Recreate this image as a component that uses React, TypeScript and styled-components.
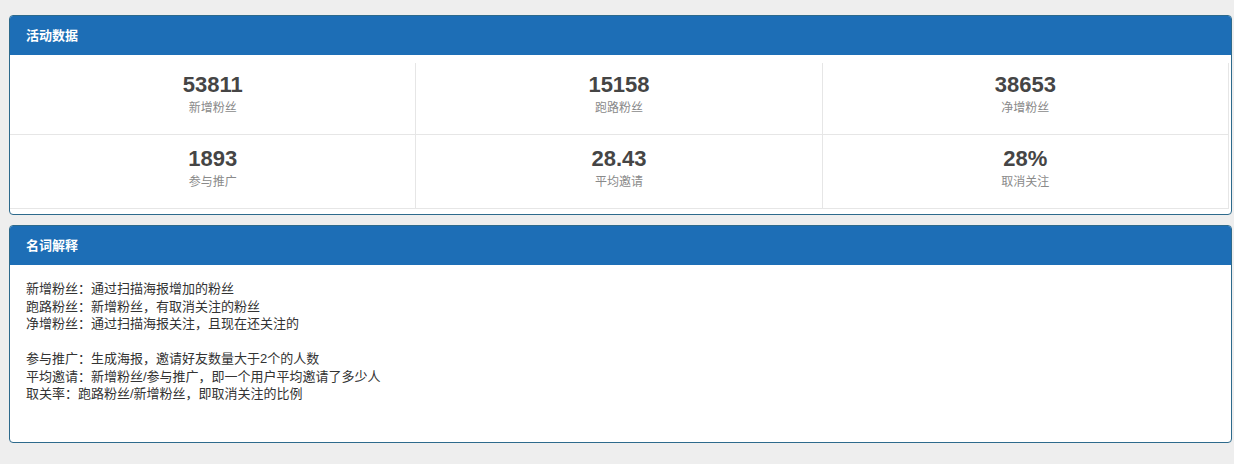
import React from "react";
import styled, { createGlobalStyle } from "styled-components";

const GlobalStyle = createGlobalStyle`
  html, body {
    margin: 0;
    padding: 0;
    background: #eeeeee;
    font-family: "Liberation Sans", "Noto Sans CJK SC", sans-serif;
  }
`;

const Page = styled.div`
  padding: 15px 2px 20px 9px;
  display: flex;
  flex-direction: column;
  gap: 10px;
`;

const Panel = styled.section`
  background: #fff;
  border: 1px solid #2d6a8c;
  border-radius: 4px;
  overflow: hidden;
`;

const PanelHeader = styled.div`
  height: 39px;
  line-height: 39px;
  padding: 0 16px;
  background: #1d6eb6;
  color: #fff;
  font-size: 13px;
  font-weight: bold;
`;

const StatsGrid = styled.div`
  display: grid;
  grid-template-columns: repeat(3, 1fr);
  padding: 8px 2px 5px 0;
`;

const StatCell = styled.div<{ $first?: boolean }>`
  height: ${(p) => (p.$first ? 72 : 74)}px;
  padding-top: ${(p) => (p.$first ? 10 : 12)}px;
  box-sizing: border-box;
  border-right: 1px solid #e6e6e6;
  border-bottom: 1px solid #e6e6e6;
  text-align: center;
`;

const StatValue = styled.div`
  font-size: 22px;
  font-weight: bold;
  line-height: 24px;
  color: #454545;
`;

const StatLabel = styled.div`
  margin-top: 1px;
  font-size: 12px;
  line-height: 20px;
  color: #8a8a8a;
`;

const Glossary = styled.div`
  padding: 15px 16px 39px;
  font-size: 13px;
  line-height: 17.5px;
  color: #333;
`;

const Line = styled.div<{ $gap?: boolean }>`
  margin-top: ${(p) => (p.$gap ? 17.5 : 0)}px;
`;

const stats = [
  { value: "53811", label: "新增粉丝" },
  { value: "15158", label: "跑路粉丝" },
  { value: "38653", label: "净增粉丝" },
  { value: "1893", label: "参与推广" },
  { value: "28.43", label: "平均邀请" },
  { value: "28%", label: "取消关注" },
];

const terms = [
  "新增粉丝：通过扫描海报增加的粉丝",
  "跑路粉丝：新增粉丝，有取消关注的粉丝",
  "净增粉丝：通过扫描海报关注，且现在还关注的",
  "参与推广：生成海报，邀请好友数量大于2个的人数",
  "平均邀请：新增粉丝/参与推广，即一个用户平均邀请了多少人",
  "取关率：跑路粉丝/新增粉丝，即取消关注的比例",
];

export default function App() {
  return (
    <>
      <GlobalStyle />
      <Page>
        <Panel>
          <PanelHeader>活动数据</PanelHeader>
          <StatsGrid>
            {stats.map((s, i) => (
              <StatCell key={s.label} $first={i < 3}>
                <StatValue>{s.value}</StatValue>
                <StatLabel>{s.label}</StatLabel>
              </StatCell>
            ))}
          </StatsGrid>
        </Panel>
        <Panel>
          <PanelHeader>名词解释</PanelHeader>
          <Glossary>
            {terms.map((t, i) => (
              <Line key={t} $gap={i === 3}>
                {t}
              </Line>
            ))}
          </Glossary>
        </Panel>
      </Page>
    </>
  );
}
